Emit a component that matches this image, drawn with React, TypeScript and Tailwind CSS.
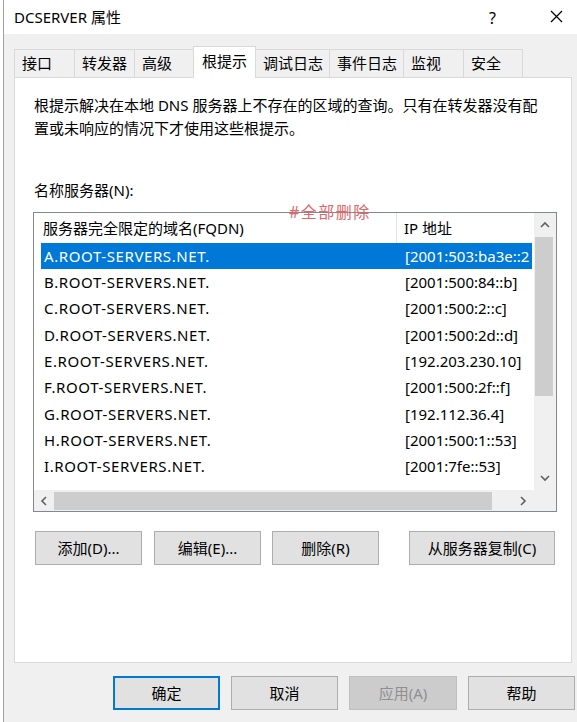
import React from "react";

type Tab = { label: string; cls: string; active?: boolean };

const tabs: Tab[] = [
  { label: "接口", cls: "w-[61px] border-l" },
  { label: "转发器", cls: "w-[60px]" },
  { label: "高级", cls: "w-[59px]" },
  { label: "根提示", cls: "w-[63px]", active: true },
  { label: "调试日志", cls: "w-[74px]" },
  { label: "事件日志", cls: "w-[74px]" },
  { label: "监视", cls: "w-[60px]" },
  { label: "安全", cls: "w-[59px]" },
];

// the first address is cut by the column edge in the real dialog
const servers = [
  ["A.ROOT-SERVERS.NET.", "[2001:503:ba3e::2"],
  ["B.ROOT-SERVERS.NET.", "[2001:500:84::b]"],
  ["C.ROOT-SERVERS.NET.", "[2001:500:2::c]"],
  ["D.ROOT-SERVERS.NET.", "[2001:500:2d::d]"],
  ["E.ROOT-SERVERS.NET.", "[192.203.230.10]"],
  ["F.ROOT-SERVERS.NET.", "[2001:500:2f::f]"],
  ["G.ROOT-SERVERS.NET.", "[192.112.36.4]"],
  ["H.ROOT-SERVERS.NET.", "[2001:500:1::53]"],
  ["I.ROOT-SERVERS.NET.", "[2001:7fe::53]"],
];

const Chevron = ({ dir }: { dir: "up" | "down" | "left" | "right" }) => {
  const d = {
    up: "M1 6 L5 2 L9 6",
    down: "M1 2 L5 6 L9 2",
    left: "M6 1 L2 5 L6 9",
    right: "M2 1 L6 5 L2 9",
  }[dir];
  const vertical = dir === "up" || dir === "down";
  return (
    <svg
      width={vertical ? 10 : 8}
      height={vertical ? 8 : 10}
      viewBox={vertical ? "0 0 10 8" : "0 0 8 10"}
      fill="none"
      stroke="#606060"
      strokeWidth="1.6"
    >
      <path d={d} />
    </svg>
  );
};

const Btn = ({ label, cls }: { label: string; cls: string }) => (
  <div
    className={`h-[34px] flex items-center justify-center border border-[#adadad] bg-[#e1e1e1] text-[15px] text-black ${cls}`}
  >
    {label}
  </div>
);

export default function App() {
  return (
    <div className="w-[577px] h-[722px] overflow-hidden bg-white flex font-['Noto_Sans','Noto_Sans_CJK_SC',sans-serif] text-black">
      <div className="w-[3px] shrink-0 bg-white" />
      <div className="flex-1 flex flex-col border-l border-[#a0a0a0] bg-[#f0f0f0]">
        {/* title bar */}
        <div className="h-[34px] bg-white flex items-center pl-[10px] relative">
          <span className="text-[15px]">DCSERVER 属性</span>
          <span className="absolute left-[485px] top-[6px] text-[16px]">?</span>
          <svg className="absolute left-[546px] top-[10px]" width="13" height="13" viewBox="0 0 13 13" stroke="#000" strokeWidth="1.2">
            <path d="M1 1 L12 12 M12 1 L1 12" />
          </svg>
        </div>

        {/* tabs */}
        <div className="flex items-end pl-[10px] pt-[12px]">
          {tabs.map((t) =>
            t.active ? (
              <div
                key={t.label}
                className={`${t.cls} h-[32px] -mb-px -ml-px relative z-10 bg-white border-t border-l border-r border-[#d9d9d9] flex items-center pl-[8px] pb-[3px] text-[15px]`}
              >
                {t.label}
              </div>
            ) : (
              <div
                key={t.label}
                className={`${t.cls} h-[28px] bg-[#f0f0f0] border-t border-r border-[#d9d9d9] flex items-center pl-[7px] text-[15px]`}
              >
                {t.label}
              </div>
            )
          )}
        </div>

        {/* panel */}
        <div className="ml-[10px] w-[558px] h-[586px] bg-white border border-[#d9d9d9] flex flex-col pl-[19px] pt-[16px]">
          <p className="text-[15px] leading-[23px]">
            根提示解决在本地 DNS 服务器上不存在的区域的查询。只有在转发器没有配
            <br />
            置或未响应的情况下才使用这些根提示。
          </p>
          <p className="text-[15px] leading-[23px] mt-[39px]">名称服务器(N):</p>

          {/* list */}
          <div className="relative mt-[10px] -ml-px w-[524px] h-[300px] border border-[#828790] flex flex-col">
            <span className="absolute left-[255px] -top-[11px] text-[16px] leading-[20px] tracking-[1.5px] text-[#e0666a]">
              #全部删除
            </span>
            <div className="flex flex-1 min-h-0">
              <div className="w-[500px] flex flex-col overflow-hidden">
                <div className="h-[30px] shrink-0 flex text-[15px]">
                  <div className="w-[363px] pl-[9px] flex items-center border-r border-[#e5e5e5]">
                    服务器完全限定的域名(FQDN)
                  </div>
                  <div className="flex-1 pl-[7px] flex items-center">IP 地址</div>
                </div>
                {servers.map(([name, ip], i) => (
                  <div
                    key={name}
                    className={`h-[26.3px] shrink-0 ml-[7px] w-[491px] flex items-center text-[15px] whitespace-nowrap overflow-hidden ${
                      i === 0 ? "bg-[#0078d7] text-white" : ""
                    }`}
                  >
                    <div className="w-[356px] pl-[3px] shrink-0 tracking-[0.6px]">{name}</div>
                    <div className="pl-[8px] shrink-0">{ip}</div>
                  </div>
                ))}
              </div>
              {/* vertical scrollbar */}
              <div className="w-[22px] flex flex-col bg-[#f0f0f0]">
                <div className="h-[24px] flex items-center justify-center">
                  <Chevron dir="up" />
                </div>
                <div className="flex-1 flex flex-col pr-[3px] pl-px">
                  <div className="h-[159px] bg-[#cdcdcd]" />
                </div>
                <div className="h-[24px] flex items-center justify-center">
                  <Chevron dir="down" />
                </div>
              </div>
            </div>
            {/* horizontal scrollbar */}
            <div className="h-[21px] flex bg-[#f0f0f0]">
              <div className="w-[500px] flex items-center">
                <div className="w-[20px] flex justify-center">
                  <Chevron dir="left" />
                </div>
                <div className="w-[438px] h-[18px] bg-[#cdcdcd]" />
                <div className="flex-1" />
                <div className="w-[22px] flex justify-center">
                  <Chevron dir="right" />
                </div>
              </div>
              <div className="flex-1 bg-[#f0f0f0]" />
            </div>
          </div>

          {/* list buttons */}
          <div className="flex mt-[19px] ml-[1px]">
            <Btn label="添加(D)..." cls="w-[107px]" />
            <Btn label="编辑(E)..." cls="w-[107px] ml-[12px]" />
            <Btn label="删除(R)" cls="w-[107px] ml-[11px]" />
            <Btn label="从服务器复制(C)" cls="w-[146px] ml-[30px]" />
          </div>
        </div>

        {/* dialog buttons */}
        <div className="flex mt-[13px] pl-[109px] gap-[11px]">
          <div className="w-[107px] h-[34px] flex items-center justify-center border-2 border-[#0078d7] bg-[#e1e1e1] text-[15px]">
            确定
          </div>
          <Btn label="取消" cls="w-[107px]" />
          <div className="w-[108px] h-[34px] flex items-center justify-center border border-[#bfbfbf] bg-[#cccccc] text-[15px] text-[#8f8f8f]">
            应用(A)
          </div>
          <Btn label="帮助" cls="w-[107px]" />
        </div>
      </div>
    </div>
  );
}
